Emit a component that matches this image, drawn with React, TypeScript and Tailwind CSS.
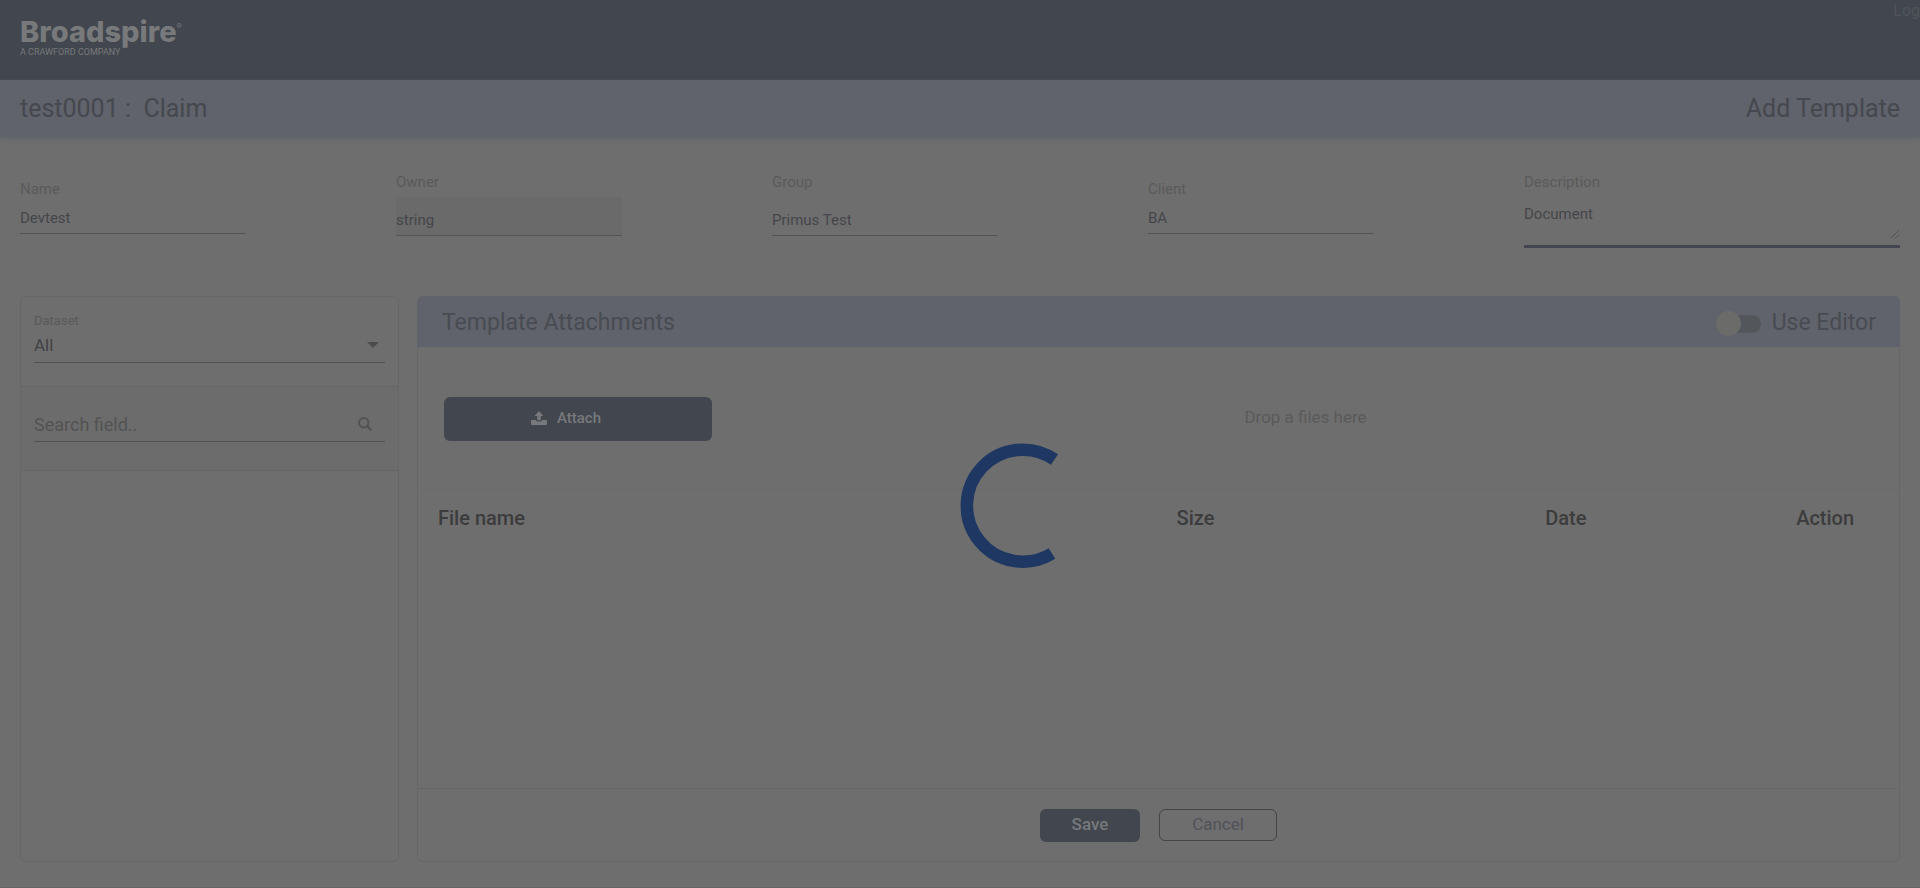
import type { ReactNode } from "react";

const lineInput =
  "w-3/5 border-b border-[#545454] text-[15px] text-[#45464a] outline-none";

function Field({ id, label, raised, children }: { id: string; label: string; raised?: boolean; children: ReactNode }) {
  return (
    <div className={raised ? "flex flex-col pt-[35px]" : "flex flex-col pt-[42px]"}>
      <label htmlFor={id} className="text-[15px] leading-5 text-[#5a5a5a]">
        {label}
      </label>
      {children}
    </div>
  );
}

function UploadIcon() {
  return (
    <svg className="h-[14px] w-4" viewBox="0 0 16 14" fill="currentColor" aria-hidden="true">
      <path d="M8 0 12.4 5H9.8V9.3H6.2V5H3.6Z" />
      <path d="M1 9H5.1V9.6Q5.3 10.6 6.4 10.6H9.6Q10.7 10.6 10.9 9.6V9H15Q16 9 16 10V13Q16 14 15 14H1Q0 14 0 13V10Q0 9 1 9Z" />
    </svg>
  );
}

function SearchIcon() {
  return (
    <svg className="h-[14px] w-[14px]" viewBox="0 0 14 14" fill="none" stroke="currentColor" aria-hidden="true">
      <circle cx="5.8" cy="5.8" r="4.7" strokeWidth="2" />
      <path d="M9.3 9.3 12.8 12.8" strokeWidth="2.2" strokeLinecap="round" />
    </svg>
  );
}

function Header() {
  return (
    <header className="flex h-20 items-start justify-between bg-[#42464e]">
      <div className="flex flex-col pt-4 pl-5 text-[#77797b]">
        <div className="flex items-start font-['Inter',sans-serif]">
          <span className="text-[29px] leading-8 font-extrabold">Broadspire</span>
          <span className="pt-1 text-[8px] leading-3">®</span>
        </div>
        <span className="text-[9px] leading-2">A CRAWFORD COMPANY</span>
      </div>
      <a href="#" className="text-base leading-[22px] text-[#50545b]">
        Log
      </a>
    </header>
  );
}

function Spinner() {
  return (
    <div className="pointer-events-none fixed inset-0 z-10" role="status" aria-label="Loading">
      <svg className="absolute top-1/2 left-1/2 -mt-0.5 h-32 w-32" viewBox="0 0 128 128" fill="none">
        <path d="M94.5 17.5A56 56 0 1 0 92 111.5" stroke="#1f3763" strokeWidth="12.5" />
      </svg>
    </div>
  );
}

export default function App() {
  return (
    <div className="flex min-h-screen flex-col border-b border-[#676467] bg-[#6e6e6e] font-['Roboto',sans-serif] text-[#45464a]">
      <Header />
      <div className="flex h-[57px] items-center justify-between bg-[#60636b] px-5 text-[25px] text-[#45484e] shadow-[0_2px_4px_#62646a]">
        <h1 className="whitespace-pre">test0001 :  Claim</h1>
        <h2>Add Template</h2>
      </div>

      <main className="flex grow flex-col px-5">
        <form className="grid h-[159px] grid-cols-5 items-start">
          <Field id="name" label="Name">
            <input id="name" defaultValue="Devtest" className={`${lineInput} h-[35px] pt-1`} />
          </Field>
          <Field id="owner" label="Owner" raised>
            <input id="owner" readOnly defaultValue="string" className={`${lineInput} mt-[5px] h-[39px] bg-[#696a69] pt-2`} />
          </Field>
          <Field id="group" label="Group" raised>
            <input id="group" defaultValue="Primus Test" className={`${lineInput} mt-[5px] h-[39px] pt-2`} />
          </Field>
          <Field id="client" label="Client">
            <input id="client" defaultValue="BA" className={`${lineInput} h-[35px] pt-1`} />
          </Field>
          <Field id="description" label="Description" raised>
            <div className="relative mt-[5px] flex h-[51px] border-b-3 border-[#43454f]">
              <textarea
                id="description"
                defaultValue="Document"
                className="w-full resize-none bg-transparent pt-[7px] text-[15px] leading-5 outline-none"
              />
              <svg className="pointer-events-none absolute right-0 bottom-1.5 h-[10px] w-[10px]" viewBox="0 0 12 12" stroke="#4e4e50" aria-hidden="true">
                <path d="M1 11 11 1M6.5 11 11 6.5" />
              </svg>
            </div>
          </Field>
        </form>

        <div className="grid h-[566px] grid-cols-[379fr_1483fr] gap-[18px]">
          <aside className="flex flex-col rounded-md border border-[#676767]">
            <div className="flex h-[89px] flex-col px-[13px] pt-4">
              <label htmlFor="dataset" className="text-[13px] leading-4 text-[#5a5a5a]">
                Dataset
              </label>
              <div className="relative flex">
                <select id="dataset" className="h-[34px] w-full appearance-none border-b border-[#505050] bg-transparent text-[17px] text-[#414245] outline-none">
                  <option>All</option>
                </select>
                <span className="pointer-events-none absolute top-[13px] right-[6px] border-x-6 border-t-6 border-x-transparent border-t-[#4c4c4c]" />
              </div>
            </div>
            <div className="flex h-[85px] items-start border-y border-[#666666] bg-[#6c6c6c] px-[13px] pt-5">
              <div className="flex h-[35px] grow items-center border-b border-[#505050] pr-[13px]">
                <input aria-label="Search field" placeholder="Search field.." className="min-w-0 grow bg-transparent text-[18px] outline-none placeholder:text-[#535353]" />
                <button type="button" aria-label="Search" className="text-[#525252]">
                  <SearchIcon />
                </button>
              </div>
            </div>
          </aside>

          <section className="flex flex-col">
            <div className="flex grow flex-col rounded-t-md border border-t-0 border-[#676767]">
              <div className="-mx-px flex h-[51px] items-center justify-between rounded-t-md bg-[#60636b] pt-1 pr-6 pl-[25px] text-[23px] text-[#484b52]">
                <h3>Template Attachments</h3>
                <label className="flex items-center gap-[10px]">
                  <span className="relative flex h-[25px] w-[46px] items-center">
                    <input
                      type="checkbox"
                      className="ml-2 h-[18px] w-[37px] appearance-none rounded-full bg-[#53575b] before:absolute before:top-0 before:left-0 before:h-[25px] before:w-[25px] before:rounded-full before:bg-[#6b6b6a] before:content-['']"
                    />
                  </span>
                  Use Editor
                </label>
              </div>
              <div className="flex h-[143px] items-start border-b border-[#6b6b6b] px-[26px] pt-[50px]">
                <button type="button" className="flex h-11 w-[268px] items-center justify-center gap-[10px] rounded-md bg-[#42464e] pr-6 pb-0.5 text-[15px] font-medium text-[#77797c]">
                  <UploadIcon />
                  Attach
                </button>
                <div className="flex h-11 grow items-center justify-center pb-0.5 pl-[26px] text-[17px] text-[#5a5a5a]">Drop a files here</div>
              </div>
              <table className="w-full table-fixed text-xl text-[#3c3c3c]">
                <thead>
                  <tr className="h-14">
                    <th className="w-[38%] px-5 text-left font-medium">File name</th>
                    <th className="w-[29%] font-medium">Size</th>
                    <th className="w-[21%] font-medium">Date</th>
                    <th className="w-[12%] pl-[30px] font-medium">Action</th>
                  </tr>
                </thead>
              </table>
            </div>
            <div className="flex h-[73px] items-center justify-center gap-[19px] rounded-b-md border border-t-0 border-[#676767]">
              <button type="button" className="h-[33px] w-[100px] rounded-md bg-[#42464e] text-[17px] font-medium text-[#77797c]">
                Save
              </button>
              <button type="button" className="h-8 w-[118px] rounded-md border border-[#43454a] text-[17px] text-[#505258]">
                Cancel
              </button>
            </div>
          </section>
        </div>
      </main>
      <Spinner />
    </div>
  );
}
